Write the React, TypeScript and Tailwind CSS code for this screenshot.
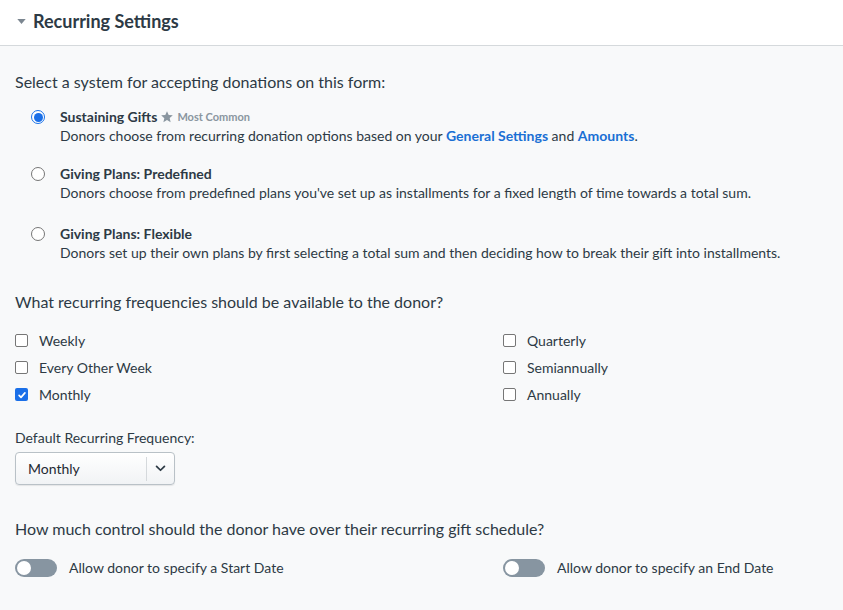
import { useState } from 'react';

const font = { fontFamily: 'Lato, "Noto Sans", sans-serif' };

function Radio({ checked }: { checked?: boolean }) {
  return checked ? (
    <span className="flex h-[14px] w-[14px] shrink-0 items-center justify-center rounded-full border border-[#1a73e8] bg-white">
      <span className="h-[9px] w-[9px] rounded-full bg-[#1a6fe8]" />
    </span>
  ) : (
    <span className="block h-[14px] w-[14px] shrink-0 rounded-full border border-[#767676] bg-white" />
  );
}

function Checkbox({ checked }: { checked?: boolean }) {
  return checked ? (
    <span className="flex h-[13px] w-[13px] shrink-0 items-center justify-center rounded-[2px] bg-[#1a6fe8]">
      <svg viewBox="0 0 12 12" className="h-[10px] w-[10px]" fill="none" stroke="white" strokeWidth="2" strokeLinecap="round" strokeLinejoin="round">
        <path d="M2.5 6.5l2.3 2.3L9.5 3.5" />
      </svg>
    </span>
  ) : (
    <span className="block h-[13px] w-[13px] shrink-0 rounded-[2px] border border-[#767676] bg-white" />
  );
}

function Toggle({ label }: { label: string }) {
  return (
    <div className="flex items-center">
      <span className="flex h-[18px] w-[42px] items-center rounded-full bg-[#8795a1] px-[2px]">
        <span className="h-[14px] w-[14px] rounded-full bg-white" />
      </span>
      <span className="ml-3 text-[14px] text-[#2d3a45]">{label}</span>
    </div>
  );
}

export default function App() {
  const [freq] = useState('Monthly');
  const options = [
    {
      title: 'Giving Plans: Predefined',
      desc: "Donors choose from predefined plans you've set up as installments for a fixed length of time towards a total sum.",
      gap: 'mt-[19px]',
    },
    {
      title: 'Giving Plans: Flexible',
      desc: 'Donors set up their own plans by first selecting a total sum and then deciding how to break their gift into installments.',
      gap: 'mt-[22px]',
    },
  ];
  const left = [
    { label: 'Weekly' },
    { label: 'Every Other Week' },
    { label: 'Monthly', checked: true },
  ];
  const right = [{ label: 'Quarterly' }, { label: 'Semiannually' }, { label: 'Annually' }];

  return (
    <div className="min-h-[610px] w-[843px] bg-[#f8f9fa] text-[#2d3a45]" style={font}>
      <div className="flex h-[46px] items-center border-b border-[#d5d9dc] bg-white pl-[17px]">
        <svg viewBox="0 0 10 6" className="mt-[-2px] h-[5px] w-[9px]" fill="#7b8690">
          <path d="M0 0h10L5 6z" />
        </svg>
        <h2 className="mt-[-2px] ml-[7px] text-[18px] font-bold text-[#2d3a45]">Recurring Settings</h2>
      </div>

      <div className="px-[15px]">
        <p className="mt-[24px] text-[16px]">Select a system for accepting donations on this form:</p>

        <div className="mt-[13px] flex flex-col pl-[16px]">
          <div className="flex">
            <span className="mt-[3px]"><Radio checked /></span>
            <div className="ml-[15px] text-[14px] leading-[19px]">
              <div className="flex items-center">
                <span className="font-bold">Sustaining Gifts</span>
                <svg viewBox="0 0 24 24" className="ml-[3px] h-[14px] w-[14px]" fill="#8a96a0">
                  <path d="M12 2l2.9 6.6 7.1.6-5.4 4.7 1.6 7L12 17.3 5.8 21l1.6-7L2 9.2l7.1-.6z" />
                </svg>
                <span className="ml-[3px] text-[11px] font-bold text-[#8a96a0]">Most Common</span>
              </div>
              <div>
                Donors choose from recurring donation options based on your{' '}
                <a className="font-bold text-[#1a6fd4]">General Settings</a> and{' '}
                <a className="font-bold text-[#1a6fd4]">Amounts</a>.
              </div>
            </div>
          </div>
          {options.map((o) => (
            <div key={o.title} className={`flex ${o.gap}`}>
              <span className="mt-[3px]"><Radio /></span>
              <div className="ml-[15px] text-[14px] leading-[19px]">
                <div className="font-bold">{o.title}</div>
                <div>{o.desc}</div>
              </div>
            </div>
          ))}
        </div>

        <p className="mt-[28px] text-[16px]">What recurring frequencies should be available to the donor?</p>

        <div className="mt-[17px] grid grid-cols-[488px_1fr]">
          {[left, right].map((col, i) => (
            <div key={i} className="flex flex-col gap-[8px]">
              {col.map((c) => (
                <label key={c.label} className="flex h-[19px] items-center text-[14px]">
                  <Checkbox checked={'checked' in c ? (c as { checked?: boolean }).checked : false} />
                  <span className="ml-[11px]">{c.label}</span>
                </label>
              ))}
            </div>
          ))}
        </div>

        <p className="mt-[23px] text-[14px]">Default Recurring Frequency:</p>
        <div className="mt-[4px] flex h-[33px] w-[160px] items-center rounded-[4px] border border-[#b9c1c7] bg-gradient-to-b from-white to-[#f1f3f5] shadow-[0_1px_1px_rgba(0,0,0,0.08)]">
          <span className="flex-1 pl-[12px] text-[14px] text-[#1f2a33]">{freq}</span>
          <span className="h-[24px] w-px bg-[#d5d9dc]" />
          <span className="flex w-[27px] justify-center">
            <svg viewBox="0 0 12 8" className="h-[7px] w-[11px]" fill="none" stroke="#2d3a45" strokeWidth="2" strokeLinecap="round" strokeLinejoin="round">
              <path d="M1.5 1.5L6 6l4.5-4.5" />
            </svg>
          </span>
        </div>

        <p className="mt-[32px] text-[16px]">How much control should the donor have over their recurring gift schedule?</p>

        <div className="mt-[16px] grid grid-cols-[488px_1fr]">
          <Toggle label="Allow donor to specify a Start Date" />
          <Toggle label="Allow donor to specify an End Date" />
        </div>
      </div>
    </div>
  );
}
